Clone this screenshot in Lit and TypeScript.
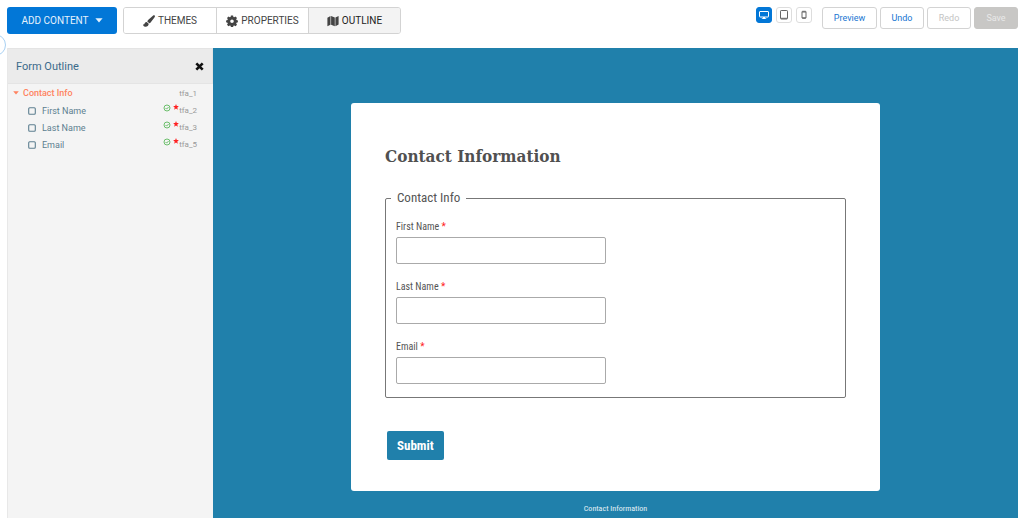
import { LitElement, html, svg, css } from "lit";
import { customElement, property, state } from "lit/decorators.js";
import { classMap } from "lit/directives/class-map.js";

const icons = {
  brush: svg`<svg viewBox="0 0 12 12" width="12" height="12" aria-hidden="true"><path fill="currentColor" d="M11.700.5c.4.6.3 1.200-.1 1.800L7.800 7.300c-.4.5-.9.900-1.500 1L4.300 6.500c.1-.6.4-1 .8-1.400L9.900.7c.6-.5 1.300-.6 1.800-.2zM3.700 6.900l2 1.900c0 2.100-1.700 3.200-3.500 3C.8 11.600.1 10.600 0 9.300c.9.5 1.300.1 1.500-.6.3-1.100 1.100-1.900 2.200-1.800z"/></svg>`,
  gear: svg`<svg viewBox="0 0 12 12" width="12" height="12" aria-hidden="true"><path fill="currentColor" fill-rule="evenodd" d="M4.900.5h2.200l.3 1.400.8.400 1.300-.8 1.500 1.500-.8 1.300.3.700 1.400.4v1.900l-1.400.4-.3.800.8 1.300-1.500 1.500-1.300-.8-.8.300-.3 1.400H4.900l-.3-1.400-.8-.300-1.300.8L1 9.800l.8-1.300-.3-.8-1.400-.4V5.400L1.500 5l.3-.7L1 3l1.500-1.500 1.300.8.8-.4zM6 4.500a1.800 1.800 0 1 0 0 3.600 1.800 1.800 0 0 0 0-3.600z"/></svg>`,
  map: svg`<svg viewBox="0 0 12 12" width="12" height="12" aria-hidden="true"><path fill="currentColor" d="M.4 2.700 3.500 1v8.700L.4 11.300zM4.100 1l3.700 1.500v8.700L4.100 9.700zM8.400 2.500 11.600.9v8.600l-3.200 1.700z"/></svg>`,
  caret: svg`<svg viewBox="0 0 8 5" width="8" height="5" aria-hidden="true"><path fill="currentColor" d="M.4.3h7.200L4 4.600z"/></svg>`,
  cross: svg`<svg viewBox="0 0 9 9" width="9" height="9" aria-hidden="true"><path stroke="currentColor" stroke-width="2.600" d="m1.300 1.300 6.400 6.400m0-6.400L1.300 7.700"/></svg>`,
  arrow: svg`<svg viewBox="0 0 6 4" width="6" height="4" aria-hidden="true"><path fill="currentColor" d="M.2.300h5.600L3 3.500z"/></svg>`,
  square: svg`<svg viewBox="0 0 8 8" width="8" height="8" aria-hidden="true"><rect x=".7" y=".7" width="6.600" height="6.600" rx="1" fill="none" stroke="currentColor" stroke-width="1.100"/></svg>`,
  check: svg`<svg viewBox="0 0 8 8" width="8" height="8" aria-hidden="true"><circle cx="4" cy="4" r="3" fill="none" stroke="currentColor" stroke-width=".9"/><path d="m2.500 4 1.100 1.100L5.600 3" fill="none" stroke="currentColor" stroke-width=".9"/></svg>`,
  star: svg`<svg viewBox="0 0 6 6" width="6" height="6" aria-hidden="true"><path fill="currentColor" d="M3 0l.8 1.900 2.100.2-1.600 1.400.5 2.200L3 4.600 1.200 5.700l.5-2.200L.1 2.100l2.100-.2z"/></svg>`,
  desktop: svg`<svg viewBox="0 0 12 10" width="12" height="10" aria-hidden="true"><rect x="1.500" y="1.500" width="9" height="5.500" rx=".5" fill="none" stroke="currentColor"/><path fill="currentColor" d="M5 7h2v1.300h1.200v.8H3.800v-.8H5z"/></svg>`,
  tablet: svg`<svg viewBox="0 0 12 10" width="12" height="10" aria-hidden="true"><rect x="2.500" y=".5" width="7" height="8.500" rx=".7" fill="none" stroke="currentColor"/><path stroke="currentColor" d="M3 8.300h6"/></svg>`,
  phone: svg`<svg viewBox="0 0 12 10" width="12" height="10" aria-hidden="true"><rect x="4" y="1.300" width="4" height="7" rx=".6" fill="none" stroke="currentColor"/><path stroke="currentColor" d="M4 2h4M4 7.800h4"/></svg>`,
};

type Device = "desktop" | "tablet" | "phone";
type Tab = "brush" | "gear" | "map";
interface Field { id: string; label: string }

const FIELDS: Field[] = [
  { id: "tfa_2", label: "First Name" },
  { id: "tfa_3", label: "Last Name" },
  { id: "tfa_5", label: "Email" },
];

const base = css`
  *, *::before { box-sizing: border-box; }
  button { font: inherit; margin: 0; cursor: pointer; }
  svg { display: block; flex: none; }
`;

@customElement("builder-toolbar")
class BuilderToolbar extends LitElement {
  @state() private device: Device = "desktop";
  @state() private tab: Tab = "map";

  static styles = [base, css`
    :host { display: flex; align-items: flex-start; justify-content: space-between; padding: 7px 6px 14px 7px; }
    .left, .actions, .devices, .right, .tabs { display: flex; }
    .left { gap: 6px; }
    .add, .tab { font-size: 10px; display: flex; align-items: center; justify-content: center; }
    .add { width: 110px; height: 27px; gap: 6px; padding: 0; border: 0; border-radius: 3px; background: #0277d7; color: #e4f1fc; }
    .tabs { border: 1px solid #d3d3d3; border-radius: 3px; overflow: hidden; height: 27px; }
    .tab { height: 25px; padding: 0; gap: 3px; width: 92px; border: 0; border-left: 1px solid #d3d3d3; background: #fff; color: #444; }
    .tab:first-child { border-left: 0; }
    .tab.on { background: #f3f3f3; color: #222; }
    .tab svg { color: #444; }
    .right { gap: 10px; }
    .devices { gap: 4px; }
    .device { width: 16px; height: 16px; padding: 0; border: 1px solid #ddd; border-radius: 3px; background: #fff; color: #666; display: grid; place-items: center; }
    .device.on { background: #0277d7; border-color: #0277d7; color: #fff; }
    .actions { gap: 3px; }
    .action { height: 22px; width: 44px; padding: 0; border: 1px solid #d3d3d3; border-radius: 3px; background: #fff; color: #1976d2; font-size: 9px; }
    .action.long { width: 55px; }
    .action:disabled { color: #c4c4c4; cursor: default; }
    .action.save:disabled { background: #c8c7c5; border-color: #c8c7c5; color: #e9e9e9; }
  `];

  private renderTab(id: Tab, label: string) {
    return html`<button class=${classMap({ tab: true, on: this.tab === id })}
      aria-pressed=${this.tab === id} @click=${() => (this.tab = id)}>${icons[id]}${label}</button>`;
  }

  render() {
    return html`
      <div class="left">
        <button class="add">ADD CONTENT ${icons.caret}</button>
        <div class="tabs">
          ${this.renderTab("brush", "THEMES")}
          ${this.renderTab("gear", "PROPERTIES")}
          ${this.renderTab("map", "OUTLINE")}
        </div>
      </div>
      <div class="right">
        <div class="devices">
          ${(["desktop", "tablet", "phone"] as Device[]).map((d) => html`
            <button class=${classMap({ device: true, on: this.device === d })} aria-label=${d}
              aria-pressed=${this.device === d} @click=${() => (this.device = d)}>${icons[d]}</button>`)}
        </div>
        <div class="actions">
          <button class="action long">Preview</button>
          <button class="action">Undo</button>
          <button class="action" disabled>Redo</button>
          <button class="action save" disabled>Save</button>
        </div>
      </div>`;
  }
}

@customElement("form-outline")
class FormOutline extends LitElement {
  @property({ attribute: false }) fields: Field[] = [];

  static styles = [base, css`
    :host { display: block; background: #f4f4f4; border-left: 1px solid #e8e8e8; }
    .head { display: flex; align-items: center; justify-content: space-between; height: 36px; padding: 0 8px; background: #ebebeb; border: 1px solid #e4e4e4; border-left: 0; }
    .title { margin: 0; font-size: 11px; font-weight: 400; color: #3a6a8a; }
    .close { padding: 0; border: 0; background: none; color: #111; }
    .row { display: flex; align-items: center; height: 17px; padding: 0 16px 0 20px; font-size: 9px; color: #5d7f90; }
    .row.group { height: 18px; padding-left: 5px; gap: 4px; color: #ff8360; font-weight: 500; }
    .name { flex: 1; }
    .row.field .name { padding-left: 6px; }
    .id { color: #999; font-size: 8px; font-weight: 400; }
    .marks { display: flex; gap: 2px; height: 14px; align-items: flex-start; }
    .valid { color: #5cb85c; }
    .required { color: #f22; }
    ul { list-style: none; margin: 0; padding: 0; }
  `];

  render() {
    return html`
      <header class="head">
        <h2 class="title">Form Outline</h2>
        <button class="close" aria-label="Close">${icons.cross}</button>
      </header>
      <div class="row group">${icons.arrow}<span class="name">Contact Info</span><span class="id">tfa_1</span></div>
      <ul>
        ${this.fields.map((f) => html`
          <li class="row field">${icons.square}<span class="name">${f.label}</span>
            <span class="marks"><span class="valid">${icons.check}</span><span class="required">${icons.star}</span></span>
            <span class="id">${f.id}</span></li>`)}
      </ul>`;
  }
}

@customElement("form-preview")
class FormPreview extends LitElement {
  @property({ attribute: false }) fields: Field[] = [];

  static styles = [base, css`
    :host { display: flex; flex-direction: column; align-items: center; gap: 12px; padding: 55px 24px 0; background: #2080ab; font-family: "Roboto Condensed", "Liberation Sans Narrow", Roboto, sans-serif; }
    .card { width: 100%; max-width: 529px; background: #fff; border-radius: 3px; padding: 39px 34px 31px; color: #555; }
    .title { margin: 0 0 19px; font: 700 17px/28px "Roboto Slab", "DejaVu Serif Condensed", "DejaVu Serif", serif; color: #505050; }
    fieldset { margin: 0; padding: 12px 10px 13px; border: 1px solid #777; border-radius: 2px; min-width: 0; display: grid; gap: 15px; }
    legend { margin-left: -5px; padding: 0 6px; font-size: 13px; line-height: 18px; }
    .field { display: grid; gap: 2px; justify-items: start; }
    label { font-size: 10px; line-height: 16px; }
    .star { color: #f22; }
    input { width: 210px; max-width: 100%; height: 27px; padding: 0 6px; border: 1px solid #aaa; border-radius: 2px; font: inherit; font-size: 12px; background: #fff; }
    .submit { margin: 33px 2px 0; height: 29px; padding: 0 10px; border: 0; border-radius: 2px; background: #2080ab; color: #fff; font-size: 13px; font-weight: 700; }
    .caption { font-size: 8px; line-height: 12px; color: #e6f2f7; }
  `];

  render() {
    return html`
      <form class="card" @submit=${(e: Event) => e.preventDefault()}>
        <h1 class="title">Contact Information</h1>
        <fieldset>
          <legend>Contact Info</legend>
          ${this.fields.map((f) => html`
            <div class="field">
              <label for=${f.id}>${f.label} <span class="star">*</span></label>
              <input id=${f.id} type="text" required />
            </div>`)}
        </fieldset>
        <button class="submit">Submit</button>
      </form>
      <div class="caption">Contact Information</div>`;
  }
}

@customElement("app-root")
class AppRoot extends LitElement {
  static styles = [base, css`
    :host { display: flex; flex-direction: column; position: relative; min-height: 100vh; overflow: hidden; background: #fff; font-family: Roboto, sans-serif; }
    .main { flex: 1; display: grid; grid-template-columns: 206px minmax(0, 1fr); padding: 0 6px 0 7px; }
    .handle { position: absolute; left: -16px; top: 34px; width: 22px; height: 22px; border: 1px solid #a9d1f3; border-radius: 50%; background: #fff; }
  `];

  render() {
    return html`
      <builder-toolbar></builder-toolbar>
      <div class="main">
        <form-outline .fields=${FIELDS}></form-outline>
        <form-preview .fields=${FIELDS}></form-preview>
      </div>
      <span class="handle"></span>`;
  }
}
